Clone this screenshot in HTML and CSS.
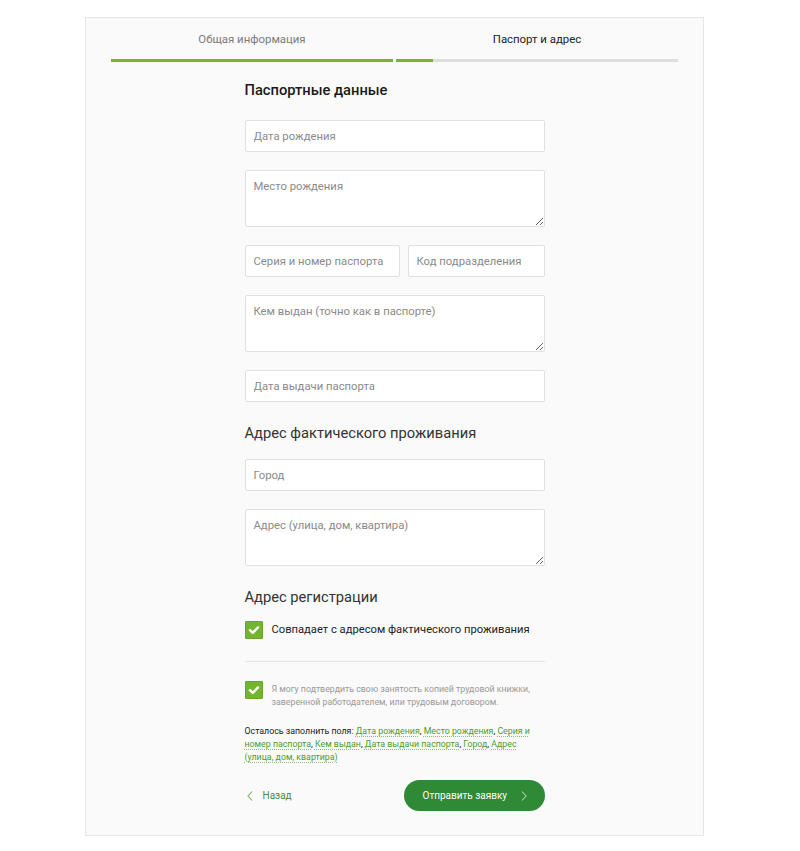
FILE: index.html
```html
<!DOCTYPE html>
<html lang="ru">
<head>
<meta charset="utf-8">
<title>Паспорт и адрес</title>
<link rel="stylesheet" href="styles.css">
</head>
<body>
<div class="card">
  <div class="tabs">
    <div class="tab tab-done">
      <span class="tab-label">Общая информация</span>
      <div class="tab-bar"><div class="tab-fill" style="width:100%"></div></div>
    </div>
    <div class="tab tab-active">
      <span class="tab-label">Паспорт и адрес</span>
      <div class="tab-bar"><div class="tab-fill" style="width:13%"></div></div>
    </div>
  </div>

  <form class="form">
    <h2 class="title title-strong">Паспортные данные</h2>
    <input class="field" type="text" placeholder="Дата рождения">
    <textarea class="field area" placeholder="Место рождения"></textarea>
    <div class="row">
      <input class="field" type="text" placeholder="Серия и номер паспорта">
      <input class="field" type="text" placeholder="Код подразделения">
    </div>
    <textarea class="field area" placeholder="Кем выдан (точно как в паспорте)"></textarea>
    <input class="field" type="text" placeholder="Дата выдачи паспорта">

    <h2 class="title">Адрес фактического проживания</h2>
    <input class="field field-first" type="text" placeholder="Город">
    <textarea class="field area" placeholder="Адрес (улица, дом, квартира)"></textarea>

    <h2 class="title">Адрес регистрации</h2>
    <label class="check">
      <span class="box"><svg viewBox="0 0 18 18" width="18" height="18"><path d="M5 9.2l2.7 2.6L13 6.4" fill="none" stroke="#fff" stroke-width="2.4" stroke-linecap="round" stroke-linejoin="round"/></svg></span>
      <span class="check-text">Совпадает с адресом фактического проживания</span>
    </label>

    <div class="sep"></div>

    <label class="check check-small">
      <span class="box"><svg viewBox="0 0 18 18" width="18" height="18"><path d="M5 9.2l2.7 2.6L13 6.4" fill="none" stroke="#fff" stroke-width="2.4" stroke-linecap="round" stroke-linejoin="round"/></svg></span>
      <span class="check-note">Я могу подтвердить свою занятость копией трудовой книжки, заверенной работодателем, или трудовым договором.</span>
    </label>

    <p class="remain">Осталось заполнить поля: <a href="#">Дата рождения</a>, <a href="#">Место рождения</a>, <a href="#">Серия и номер паспорта</a>, <a href="#">Кем выдан</a>, <a href="#">Дата выдачи паспорта</a>, <a href="#">Город</a>, <a href="#">Адрес (улица, дом, квартира)</a></p>

    <div class="actions">
      <a class="back" href="#"><svg viewBox="0 0 8 12" width="8" height="12"><path d="M6 1.5L2 6l4 4.5" fill="none" stroke="#7ab35c" stroke-width="1.1"/></svg><span>Назад</span></a>
      <button class="submit" type="button"><span>Отправить заявку</span><svg viewBox="0 0 8 12" width="8" height="12"><path d="M2 1.5L6 6l-4 4.5" fill="none" stroke="#a9cfac" stroke-width="1.1"/></svg></button>
    </div>
  </form>
</div>
</body>
</html>
```
FILE: styles.css
```css
* { box-sizing: border-box; }
body {
  margin: 0;
  background: #fff;
  font-family: Roboto, "Liberation Sans", Arial, sans-serif;
  color: #222;
}
.card {
  margin: 17px 0 0 85px;
  width: 619px;
  height: 819px;
  background: #fafafa;
  border: 1px solid #e6e6e6;
  padding: 0 25px;
}
.tabs {
  display: flex;
  gap: 3px;
}
.tab {
  flex: 1;
  display: flex;
  flex-direction: column;
  align-items: center;
}
.tab-label {
  font-size: 11.4px;
  line-height: 16px;
  margin-top: 13px;
  height: 16px;
}
.tab-done .tab-label { color: #7a7a7a; }
.tab-active .tab-label { color: #222; }
.tab-bar {
  margin-top: 12px;
  width: 100%;
  height: 3px;
  background: #dedede;
}
.tab-fill {
  height: 100%;
  background: #74b72e;
}
.form {
  width: 300px;
  margin: 0 auto;
  display: flex;
  flex-direction: column;
}
.title {
  margin: 18px 0 0;
  font-size: 14.7px;
  line-height: 20px;
  font-weight: 400;
  color: #333;
}
.title-strong {
  font-weight: 500;
  color: #1a1a1a;
}
.field {
  display: block;
  width: 100%;
  height: 32px;
  margin-top: 18px;
  border: 1px solid #e0e0e0;
  border-radius: 2px;
  background: #fff;
  padding: 0 8px;
  font-family: inherit;
  font-size: 11.3px;
  color: #222;
  outline: none;
}
.title + .field { margin-top: 20px; }
.title + .field-first { margin-top: 16px; }
.field::placeholder { color: #8a8a8a; }
.area {
  height: 57px;
  padding: 8px 8px;
  line-height: 16px;
  resize: vertical;
}
.row {
  display: grid;
  grid-template-columns: 155px 1fr;
  gap: 8px;
  margin-top: 18px;
}
.row .field { margin-top: 0; }
.field + .title, .area + .title { margin-top: 21px; }
.check {
  display: flex;
  align-items: center;
  gap: 9px;
  margin-top: 14px;
  cursor: pointer;
}
.box {
  flex: none;
  width: 18px;
  height: 18px;
  background: #74b52f;
  border: 1px solid #6aa52a;
  border-radius: 1px;
  display: flex;
  align-items: center;
  justify-content: center;
}
.box svg { display: block; margin: -1px; }
.check-text {
  font-size: 11.2px;
  line-height: 16px;
  color: #222;
}
.sep {
  margin-top: 22px;
  height: 1px;
  background: #e4e4e4;
}
.check-small {
  align-items: flex-start;
  margin-top: 19px;
}
.check-note {
  font-size: 8.8px;
  line-height: 13px;
  color: #999;
  margin-top: 2px;
}
.remain {
  margin: 16px 0 0;
  font-size: 8.8px;
  line-height: 13px;
  color: #222;
}
.remain a {
  color: #4e9a2c;
  text-decoration: underline dotted #8cc070;
  text-underline-offset: 2px;
}
.actions {
  display: flex;
  justify-content: space-between;
  align-items: center;
  margin-top: 16px;
}
.back {
  display: flex;
  align-items: center;
  gap: 9px;
  font-size: 10px;
  color: #4d8a3c;
  text-decoration: none;
  padding-left: 1px;
}
.back svg { display: block; }
.submit {
  width: 141px;
  height: 31px;
  border: none;
  border-radius: 16px;
  background: #2e8a35;
  color: #fff;
  font-family: inherit;
  font-size: 10px;
  display: flex;
  align-items: center;
  justify-content: space-between;
  padding: 0 17px 0 19px;
  cursor: pointer;
}
.submit svg { display: block; }
```
